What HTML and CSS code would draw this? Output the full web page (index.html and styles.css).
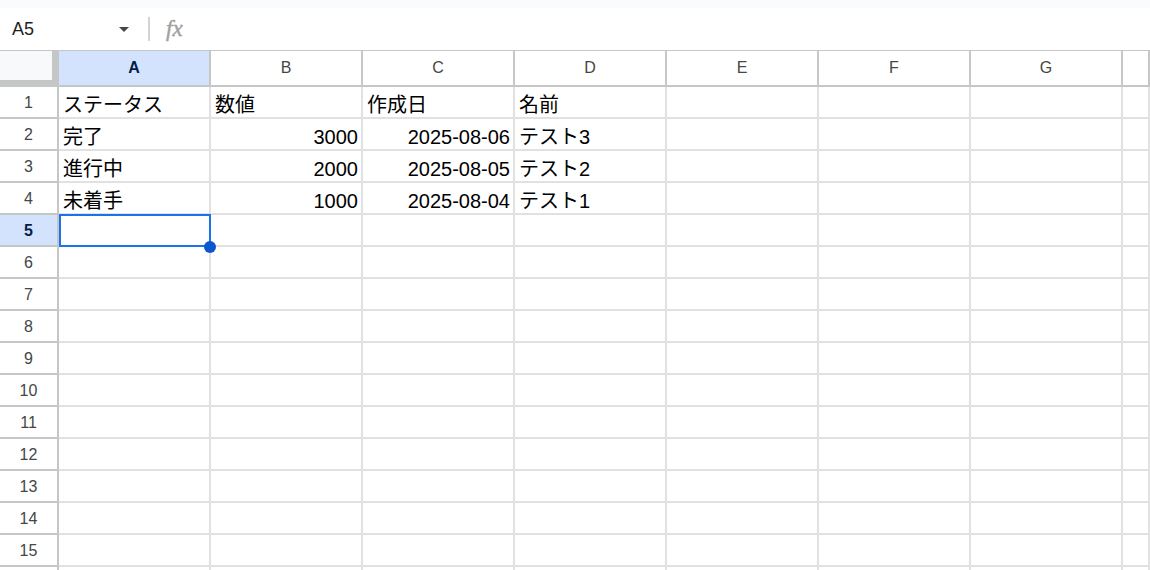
FILE: index.html
```html
<!DOCTYPE html>
<html lang="ja">
<head>
<meta charset="utf-8">
<title>Sheet</title>
<link rel="stylesheet" href="styles.css">
</head>
<body>
<div class="topstrip"></div>
<div class="formula-bar">
  <div class="namebox"><span class="ref">A5</span><span class="caret"></span></div>
  <div class="sep"></div>
  <div class="fx">fx</div>
</div>
<div class="sheet">
  <div class="row header-row">
    <div class="corner"><div class="corner-inner"></div></div>
    <div class="col-h active">A</div>
    <div class="col-h">B</div>
    <div class="col-h">C</div>
    <div class="col-h">D</div>
    <div class="col-h">E</div>
    <div class="col-h">F</div>
    <div class="col-h">G</div>
    <div class="col-h"></div>
  </div>
  <div class="row">
    <div class="row-h">1</div>
    <div class="cell">ステータス</div><div class="cell">数値</div><div class="cell">作成日</div><div class="cell">名前</div>
    <div class="cell"></div><div class="cell"></div><div class="cell"></div><div class="cell"></div>
  </div>
  <div class="row">
    <div class="row-h">2</div>
    <div class="cell">完了</div><div class="cell num">3000</div><div class="cell num">2025-08-06</div><div class="cell">テスト3</div>
    <div class="cell"></div><div class="cell"></div><div class="cell"></div><div class="cell"></div>
  </div>
  <div class="row">
    <div class="row-h">3</div>
    <div class="cell">進行中</div><div class="cell num">2000</div><div class="cell num">2025-08-05</div><div class="cell">テスト2</div>
    <div class="cell"></div><div class="cell"></div><div class="cell"></div><div class="cell"></div>
  </div>
  <div class="row">
    <div class="row-h">4</div>
    <div class="cell">未着手</div><div class="cell num">1000</div><div class="cell num">2025-08-04</div><div class="cell">テスト1</div>
    <div class="cell"></div><div class="cell"></div><div class="cell"></div><div class="cell"></div>
  </div>
  <div class="row">
    <div class="row-h active">5</div>
    <div class="cell selected"><div class="sel"></div><div class="handle"></div></div><div class="cell"></div><div class="cell"></div><div class="cell"></div>
    <div class="cell"></div><div class="cell"></div><div class="cell"></div><div class="cell"></div>
  </div>
  <div class="row"><div class="row-h">6</div><div class="cell"></div><div class="cell"></div><div class="cell"></div><div class="cell"></div><div class="cell"></div><div class="cell"></div><div class="cell"></div><div class="cell"></div></div>
  <div class="row"><div class="row-h">7</div><div class="cell"></div><div class="cell"></div><div class="cell"></div><div class="cell"></div><div class="cell"></div><div class="cell"></div><div class="cell"></div><div class="cell"></div></div>
  <div class="row"><div class="row-h">8</div><div class="cell"></div><div class="cell"></div><div class="cell"></div><div class="cell"></div><div class="cell"></div><div class="cell"></div><div class="cell"></div><div class="cell"></div></div>
  <div class="row"><div class="row-h">9</div><div class="cell"></div><div class="cell"></div><div class="cell"></div><div class="cell"></div><div class="cell"></div><div class="cell"></div><div class="cell"></div><div class="cell"></div></div>
  <div class="row"><div class="row-h">10</div><div class="cell"></div><div class="cell"></div><div class="cell"></div><div class="cell"></div><div class="cell"></div><div class="cell"></div><div class="cell"></div><div class="cell"></div></div>
  <div class="row"><div class="row-h">11</div><div class="cell"></div><div class="cell"></div><div class="cell"></div><div class="cell"></div><div class="cell"></div><div class="cell"></div><div class="cell"></div><div class="cell"></div></div>
  <div class="row"><div class="row-h">12</div><div class="cell"></div><div class="cell"></div><div class="cell"></div><div class="cell"></div><div class="cell"></div><div class="cell"></div><div class="cell"></div><div class="cell"></div></div>
  <div class="row"><div class="row-h">13</div><div class="cell"></div><div class="cell"></div><div class="cell"></div><div class="cell"></div><div class="cell"></div><div class="cell"></div><div class="cell"></div><div class="cell"></div></div>
  <div class="row"><div class="row-h">14</div><div class="cell"></div><div class="cell"></div><div class="cell"></div><div class="cell"></div><div class="cell"></div><div class="cell"></div><div class="cell"></div><div class="cell"></div></div>
  <div class="row"><div class="row-h">15</div><div class="cell"></div><div class="cell"></div><div class="cell"></div><div class="cell"></div><div class="cell"></div><div class="cell"></div><div class="cell"></div><div class="cell"></div></div>
  <div class="row"><div class="row-h"></div><div class="cell"></div><div class="cell"></div><div class="cell"></div><div class="cell"></div><div class="cell"></div><div class="cell"></div><div class="cell"></div><div class="cell"></div></div>
</div>
</body>
</html>
```
FILE: styles.css
```css
* { box-sizing: border-box; }
html, body {
  margin: 0;
  padding: 0;
  background: #ffffff;
  overflow: hidden;
  height: 570px;
}
body {
  font-family: "Liberation Sans", Arial, "Noto Sans CJK JP", sans-serif;
  color: #000000;
}
.topstrip {
  height: 8px;
  background: #f9fbfd;
}
.formula-bar {
  height: 42px;
  display: flex;
  align-items: center;
  padding-left: 12px;
  background: #ffffff;
}
.namebox {
  width: 117px;
  display: flex;
  align-items: center;
  justify-content: space-between;
}
.ref {
  font-size: 18px;
  color: #1f1f1f;
}
.caret {
  width: 0;
  height: 0;
  border-left: 5px solid transparent;
  border-right: 5px solid transparent;
  border-top: 5px solid #444746;
  margin-top: 1px;
}
.sep {
  width: 2px;
  height: 24px;
  background: #d3d3d3;
  margin-left: 19px;
}
.fx {
  margin-left: 16px;
  font-family: "Liberation Serif", "Times New Roman", serif;
  font-style: italic;
  font-size: 23px;
  color: #a0a0a0;
  line-height: 1;
  margin-top: -2px;
  -webkit-text-stroke: 0.4px #a0a0a0;
}
.sheet {
  border-top: 1px solid #c4c7c5;
  height: 520px;
  overflow: hidden;
}
.row {
  display: grid;
  grid-template-columns: 59px repeat(7, 152px) 1fr;
  height: 32px;
}
.header-row {
  height: 36px;
}
.corner {
  background: #c4c7c5;
  height: 36px;
}
.corner-inner {
  width: 52px;
  height: 29px;
  background: #f8f9fa;
}
.col-h {
  border-right: 2px solid #c4c7c5;
  border-bottom: 2px solid #c4c7c5;
  display: flex;
  align-items: center;
  justify-content: center;
  font-size: 16px;
  color: #444746;
  background: #ffffff;
}
.col-h.active, .row-h.active {
  background: #d3e3fd;
  color: #041e49;
  font-weight: bold;
}
.row-h {
  border-right: 2px solid #c4c7c5;
  border-bottom: 2px solid #c4c7c5;
  display: flex;
  align-items: center;
  justify-content: center;
  font-size: 16px;
  color: #444746;
  padding-top: 1px;
}
.cell {
  border-right: 2px solid #e1e1e1;
  border-bottom: 2px solid #e1e1e1;
  display: flex;
  align-items: flex-end;
  padding: 0 3px 1px 4px;
  font-size: 20px;
  line-height: 22px;
  white-space: nowrap;
  overflow: visible;
}
.cell.num {
  justify-content: flex-end;
}
.cell.selected {
  position: relative;
}
.sel {
  position: absolute;
  top: -1px;
  left: 0;
  width: 152px;
  height: 33px;
  border: 2px solid #1a73e8;
  z-index: 2;
}
.handle {
  position: absolute;
  left: 145px;
  top: 26px;
  width: 12px;
  height: 12px;
  border-radius: 50%;
  background: #0b57d0;
  z-index: 3;
}
```
